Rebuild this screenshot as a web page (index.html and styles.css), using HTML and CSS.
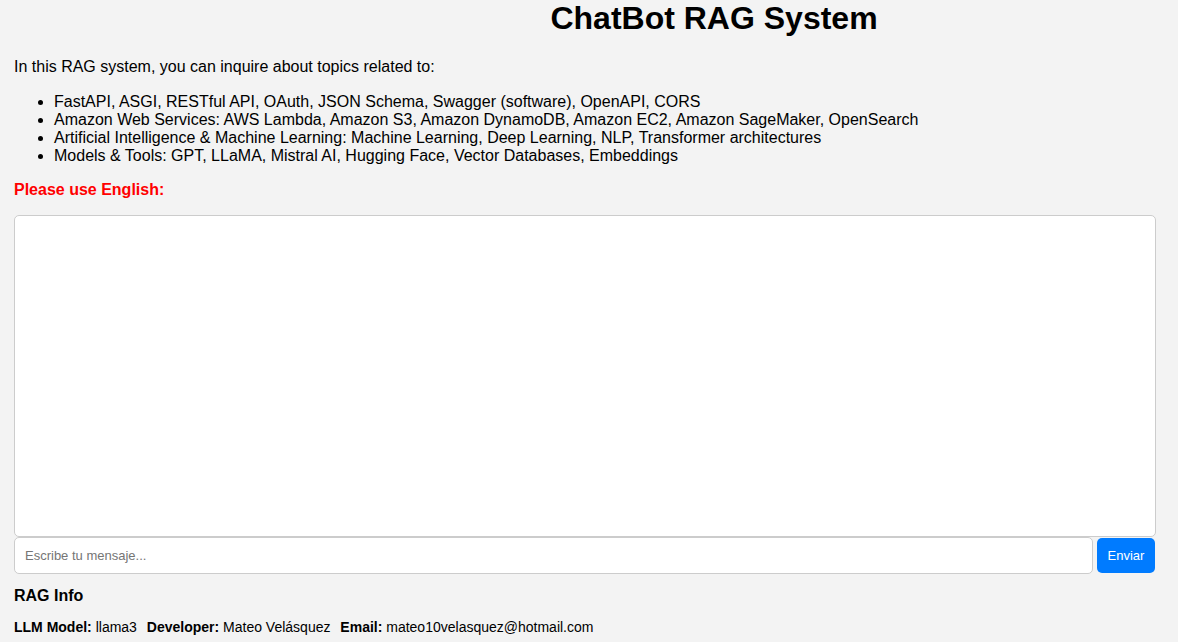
FILE: index.html
```html
<!DOCTYPE html>
<html lang="en">
<head>
<meta charset="utf-8">
<title>ChatBot RAG System</title>
<link rel="stylesheet" href="styles.css">
</head>
<body>
<div class="page">
  <h1 class="title">ChatBot RAG System</h1>
  <p class="intro">In this RAG system, you can inquire about topics related to:</p>
  <ul class="topics">
    <li>FastAPI, ASGI, RESTful API, OAuth, JSON Schema, Swagger (software), OpenAPI, CORS</li>
    <li>Amazon Web Services: AWS Lambda, Amazon S3, Amazon DynamoDB, Amazon EC2, Amazon SageMaker, OpenSearch</li>
    <li>Artificial Intelligence &amp; Machine Learning: Machine Learning, Deep Learning, NLP, Transformer architectures</li>
    <li>Models &amp; Tools: GPT, LLaMA, Mistral AI, Hugging Face, Vector Databases, Embeddings</li>
  </ul>
  <p class="warning">Please use English:</p>
  <div class="chat-box"></div>
  <div class="input-row">
    <input class="msg-input" type="text" placeholder="Escribe tu mensaje...">
    <button class="send-btn">Enviar</button>
  </div>
  <h3 class="info-title">RAG Info</h3>
  <p class="info-line"><span class="info-item"><b>LLM Model:</b> llama3</span> <span class="info-item"><b>Developer:</b> Mateo Velásquez</span> <span class="info-item"><b>Email:</b> mateo10velasquez@hotmail.com</span></p>
</div>
</body>
</html>
```
FILE: styles.css
```css
html, body {
  margin: 0;
  padding: 0;
  background: #f3f3f3;
  font-family: "Liberation Sans", Arial, sans-serif;
  color: #000;
}
.page {
  padding: 0 22px 0 14px;
}
.title {
  margin: 0;
  font-size: 32px;
  line-height: 37px;
  font-weight: bold;
  text-align: center;
  padding-left: 258px;
}
.intro {
  margin: 21px 0 0;
  font-size: 16px;
  line-height: 18px;
}
.topics {
  margin: 17px 0 0;
  padding-left: 40px;
  font-size: 16px;
  line-height: 18px;
}
.warning {
  margin: 16px 0 0;
  color: #ff0000;
  font-weight: bold;
  font-size: 16px;
  line-height: 18px;
}
.chat-box {
  margin-top: 16px;
  height: 320px;
  background: #fff;
  border: 1px solid #ccc;
  border-radius: 5px;
}
.input-row {
  display: flex;
  gap: 4px;
  align-items: stretch;
  margin-right: 1px;
}
.msg-input {
  flex: 1;
  height: 37px;
  box-sizing: border-box;
  border: 1px solid #ccc;
  border-radius: 5px;
  padding: 0 10px;
  font-family: "Liberation Sans", Arial, sans-serif;
  font-size: 13px;
  background: #fff;
  outline: none;
}
.msg-input::placeholder {
  color: #757575;
}
.send-btn {
  width: 58px;
  height: 35px;
  margin-top: 1px;
  border: none;
  border-radius: 5px;
  background: #007bff;
  color: #fff;
  font-family: "Liberation Sans", Arial, sans-serif;
  font-size: 13px;
  padding: 0;
}
.info-title {
  margin: 12px 0 0;
  font-size: 16px;
  line-height: 20px;
  font-weight: bold;
}
.info-line {
  margin: 13px 0 0;
  font-size: 14px;
  line-height: 16px;
}
.info-item {
  margin-right: 6px;
}
```
